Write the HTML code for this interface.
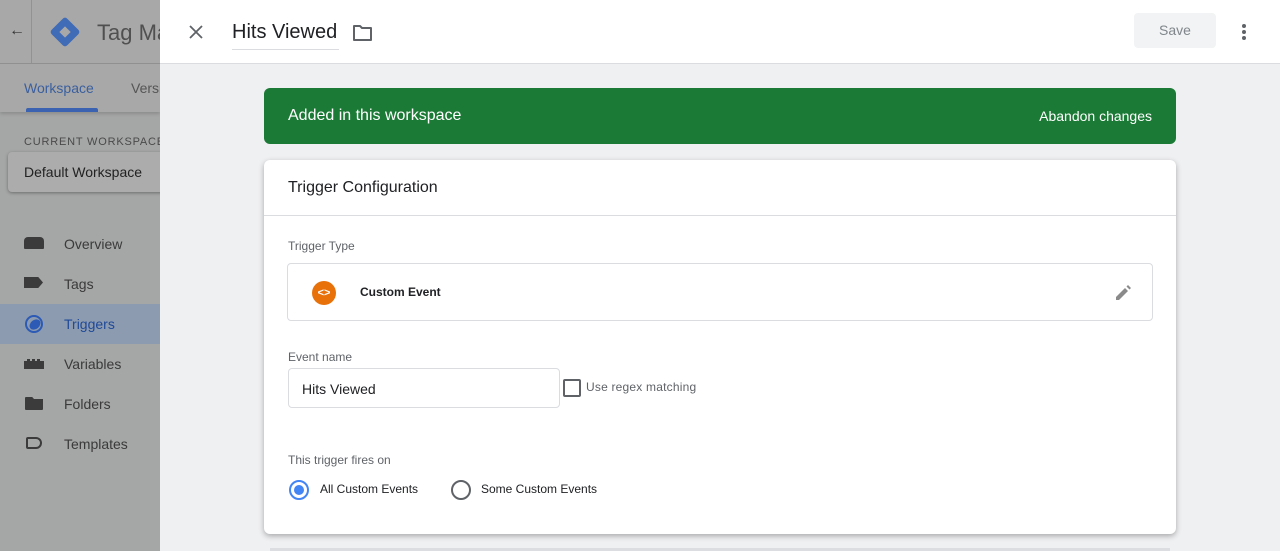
<!DOCTYPE html>
<html><head><meta charset="utf-8"><style>
*{box-sizing:border-box;margin:0;padding:0;white-space:nowrap}
body{width:1280px;height:551px;overflow:hidden;font-family:"Liberation Sans",Arial,sans-serif;background:#eff0f2;position:relative}
.side{position:absolute;left:0;top:0;width:160px;height:551px;background:#a5a6a6;overflow:hidden}
.sh{height:64px;background:#a8a8a8;border-bottom:1px solid #929292;position:relative}
.tabs{height:48px;background:#a8a8a8;position:relative;box-shadow:0 2px 3px rgba(0,0,0,.15)}
.abs{position:absolute}
.main{position:absolute;left:160px;top:0;right:0;height:551px}
.top{position:absolute;left:0;top:0;right:0;height:64px;background:#fff;border-bottom:1px solid #dadce0}
.banner{position:absolute;left:104px;top:88px;width:912px;height:56px;background:#1b7a35;border-radius:6px;color:#fff}
.card{position:absolute;left:104px;top:160px;width:912px;height:374px;background:#fff;border-radius:6px;box-shadow:0 2px 6px rgba(0,0,0,.3)}
.lbl{position:absolute;font-size:12px;color:#5f6368}
.nav{position:absolute;left:0;width:160px;height:40px;font-size:14px;color:#3a3a3a}
.nav span{position:absolute;left:64px;top:12px}
.nav i{position:absolute;left:24px;top:13px;width:20px;height:13px;background:#3b3b3b}
</style></head><body>
<div class="side">
 <div class="sh">
  <div class="abs" style="left:31px;top:0;width:1px;height:63px;background:#929292"></div>
  <div class="abs" style="left:9px;top:22px;font-size:16px;color:#333">&#8592;</div>
  <svg class="abs" style="left:49px;top:16px" width="32" height="32" viewBox="0 0 32 32"><rect x="5" y="5" width="22" height="22" rx="3" transform="rotate(45 16 16)" fill="#3f6bb7"/><rect x="12" y="12" width="8" height="8" transform="rotate(45 16 16)" fill="#a8a8a8"/></svg>
  <div class="abs" style="left:97px;top:20px;font-size:22px;color:#505050">Tag Manager</div>
 </div>
 <div class="tabs">
  <div class="abs" style="left:24px;top:16px;font-size:14px;color:#3a5f9f">Workspace</div>
  <div class="abs" style="left:131px;top:16px;font-size:14px;color:#555">Versions</div>
  <div class="abs" style="left:26px;top:44px;width:72px;height:4px;background:#3a62b0;border-radius:2px 2px 0 0"></div>
 </div>
 <div class="abs" style="left:24px;top:136px;font-size:11px;letter-spacing:.8px;color:#4a4a4a">CURRENT WORKSPACE</div>
 <div class="abs" style="left:8px;top:152px;width:170px;height:40px;background:#acacac;border-radius:4px;box-shadow:0 1px 3px rgba(0,0,0,.35)"></div>
 <div class="abs" style="left:24px;top:164px;font-size:14px;color:#222">Default Workspace</div>
 <div class="nav" style="top:224px"><i style="border-radius:4px 4px 1px 1px;height:12px"></i><span>Overview</span></div>
 <div class="nav" style="top:264px"><i style="width:19px;height:11px;clip-path:polygon(0 0,75% 0,100% 50%,75% 100%,0 100%)"></i><span>Tags</span></div>
 <div class="nav" style="top:304px;background:#8d9bb0;color:#1f4a97"><svg class="abs" style="left:24px;top:10px" width="20" height="20" viewBox="0 0 20 20"><circle cx="10" cy="10" r="8" fill="none" stroke="#2c5ab5" stroke-width="2"/><ellipse cx="11" cy="10.5" rx="6" ry="4.5" transform="rotate(-40 11 10.5)" fill="#2c5ab5"/></svg><span>Triggers</span></div>
 <div class="nav" style="top:344px"><i style="height:10px;top:15px;clip-path:polygon(0 20%,15% 20%,15% 0,30% 0,30% 20%,40% 20%,40% 0,55% 0,55% 20%,65% 20%,65% 0,80% 0,80% 20%,100% 20%,100% 100%,0 100%)"></i><span>Variables</span></div>
 <div class="nav" style="top:384px"><i style="left:25px;width:18px;height:13px;border-radius:1px;clip-path:polygon(0 0,40% 0,50% 15%,100% 15%,100% 100%,0 100%)"></i><span>Folders</span></div>
 <div class="nav" style="top:424px"><i style="left:26px;width:16px;height:12px;background:none;border:2px solid #3b3b3b;border-radius:2px 6px 6px 2px"></i><span>Templates</span></div>
</div>
<div class="main">
 <div class="top">
  <svg class="abs" style="left:28px;top:24px" width="16" height="16" viewBox="0 0 16 16"><path d="M2 2L14 14M14 2L2 14" stroke="#5f6368" stroke-width="1.8"/></svg>
  <div class="abs" style="left:72px;top:21px;font-size:20px;color:#202124">Hits Viewed</div>
  <div class="abs" style="left:72px;top:49px;width:107px;height:1px;background:#dadce0"></div>
  <svg class="abs" style="left:192px;top:24px" width="22" height="18" viewBox="0 0 22 18"><path d="M2 2h6l2 2h9v12H2z" fill="none" stroke="#5f6368" stroke-width="2" stroke-linejoin="round"/></svg>
  <div class="abs" style="left:974px;top:13px;width:82px;height:35px;background:#f1f3f4;border-radius:4px;font-size:14px;color:#80868b;text-align:center;line-height:35px">Save</div>
  <svg class="abs" style="left:1080px;top:23px" width="8" height="18" viewBox="0 0 8 18"><circle cx="4" cy="3" r="2" fill="#5f6368"/><circle cx="4" cy="9" r="2" fill="#5f6368"/><circle cx="4" cy="15" r="2" fill="#5f6368"/></svg>
 </div>
 <div class="banner">
  <div class="abs" style="left:24px;top:19px;font-size:16px">Added in this workspace</div>
  <div class="abs" style="right:24px;top:20px;font-size:14px">Abandon changes</div>
 </div>
 <div class="card">
  <div class="abs" style="left:24px;top:19px;font-size:16px;color:#202124">Trigger Configuration</div>
  <div class="abs" style="left:0;right:0;top:55px;height:1px;background:#dadce0"></div>
  <div class="lbl" style="left:24px;top:79px">Trigger Type</div>
  <div class="abs" style="left:23px;top:103px;width:866px;height:58px;border:1px solid #dadce0;border-radius:4px">
   <div class="abs" style="left:24px;top:17px;width:24px;height:24px;border-radius:50%;background:#e8710a;color:#fff;font-size:11px;font-weight:bold;text-align:center;line-height:24px">&lt;&gt;</div>
   <div class="abs" style="left:72px;top:21px;font-size:12px;font-weight:bold;color:#202124">Custom Event</div>
   <svg class="abs" style="left:826px;top:18px" width="20" height="20" viewBox="0 0 20 20"><path d="M2 15v3h3l9-9-3-3zM15.5 7.5l-3-3 1.5-1.5 3 3z" fill="#8a8a8a"/></svg>
  </div>
  <div class="lbl" style="left:24px;top:190px">Event name</div>
  <div class="abs" style="left:24px;top:208px;width:272px;height:40px;border:1px solid #dadce0;border-radius:4px;font-size:14px;color:#202124;padding:12px 0 0 13px">Hits Viewed</div>
  <div class="abs" style="left:299px;top:219px;width:18px;height:18px;border:2px solid #5f6368;border-radius:2px"></div>
  <div class="lbl" style="left:322px;top:220px;letter-spacing:.2px">Use regex matching</div>
  <div class="lbl" style="left:24px;top:293px;font-size:12px">This trigger fires on</div>
  <div class="abs" style="left:25px;top:320px;width:20px;height:20px;border:2px solid #4285f4;border-radius:50%"><div class="abs" style="left:3px;top:3px;width:10px;height:10px;border-radius:50%;background:#4285f4"></div></div>
  <div class="abs" style="left:56px;top:322px;font-size:12px;color:#202124">All Custom Events</div>
  <div class="abs" style="left:187px;top:320px;width:20px;height:20px;border:2px solid #5f6368;border-radius:50%"></div>
  <div class="abs" style="left:217px;top:322px;font-size:12px;color:#202124">Some Custom Events</div>
 </div>
 <div class="abs" style="left:110px;top:548px;width:900px;height:3px;background:#dcdde0"></div>
</div>
</body></html>
